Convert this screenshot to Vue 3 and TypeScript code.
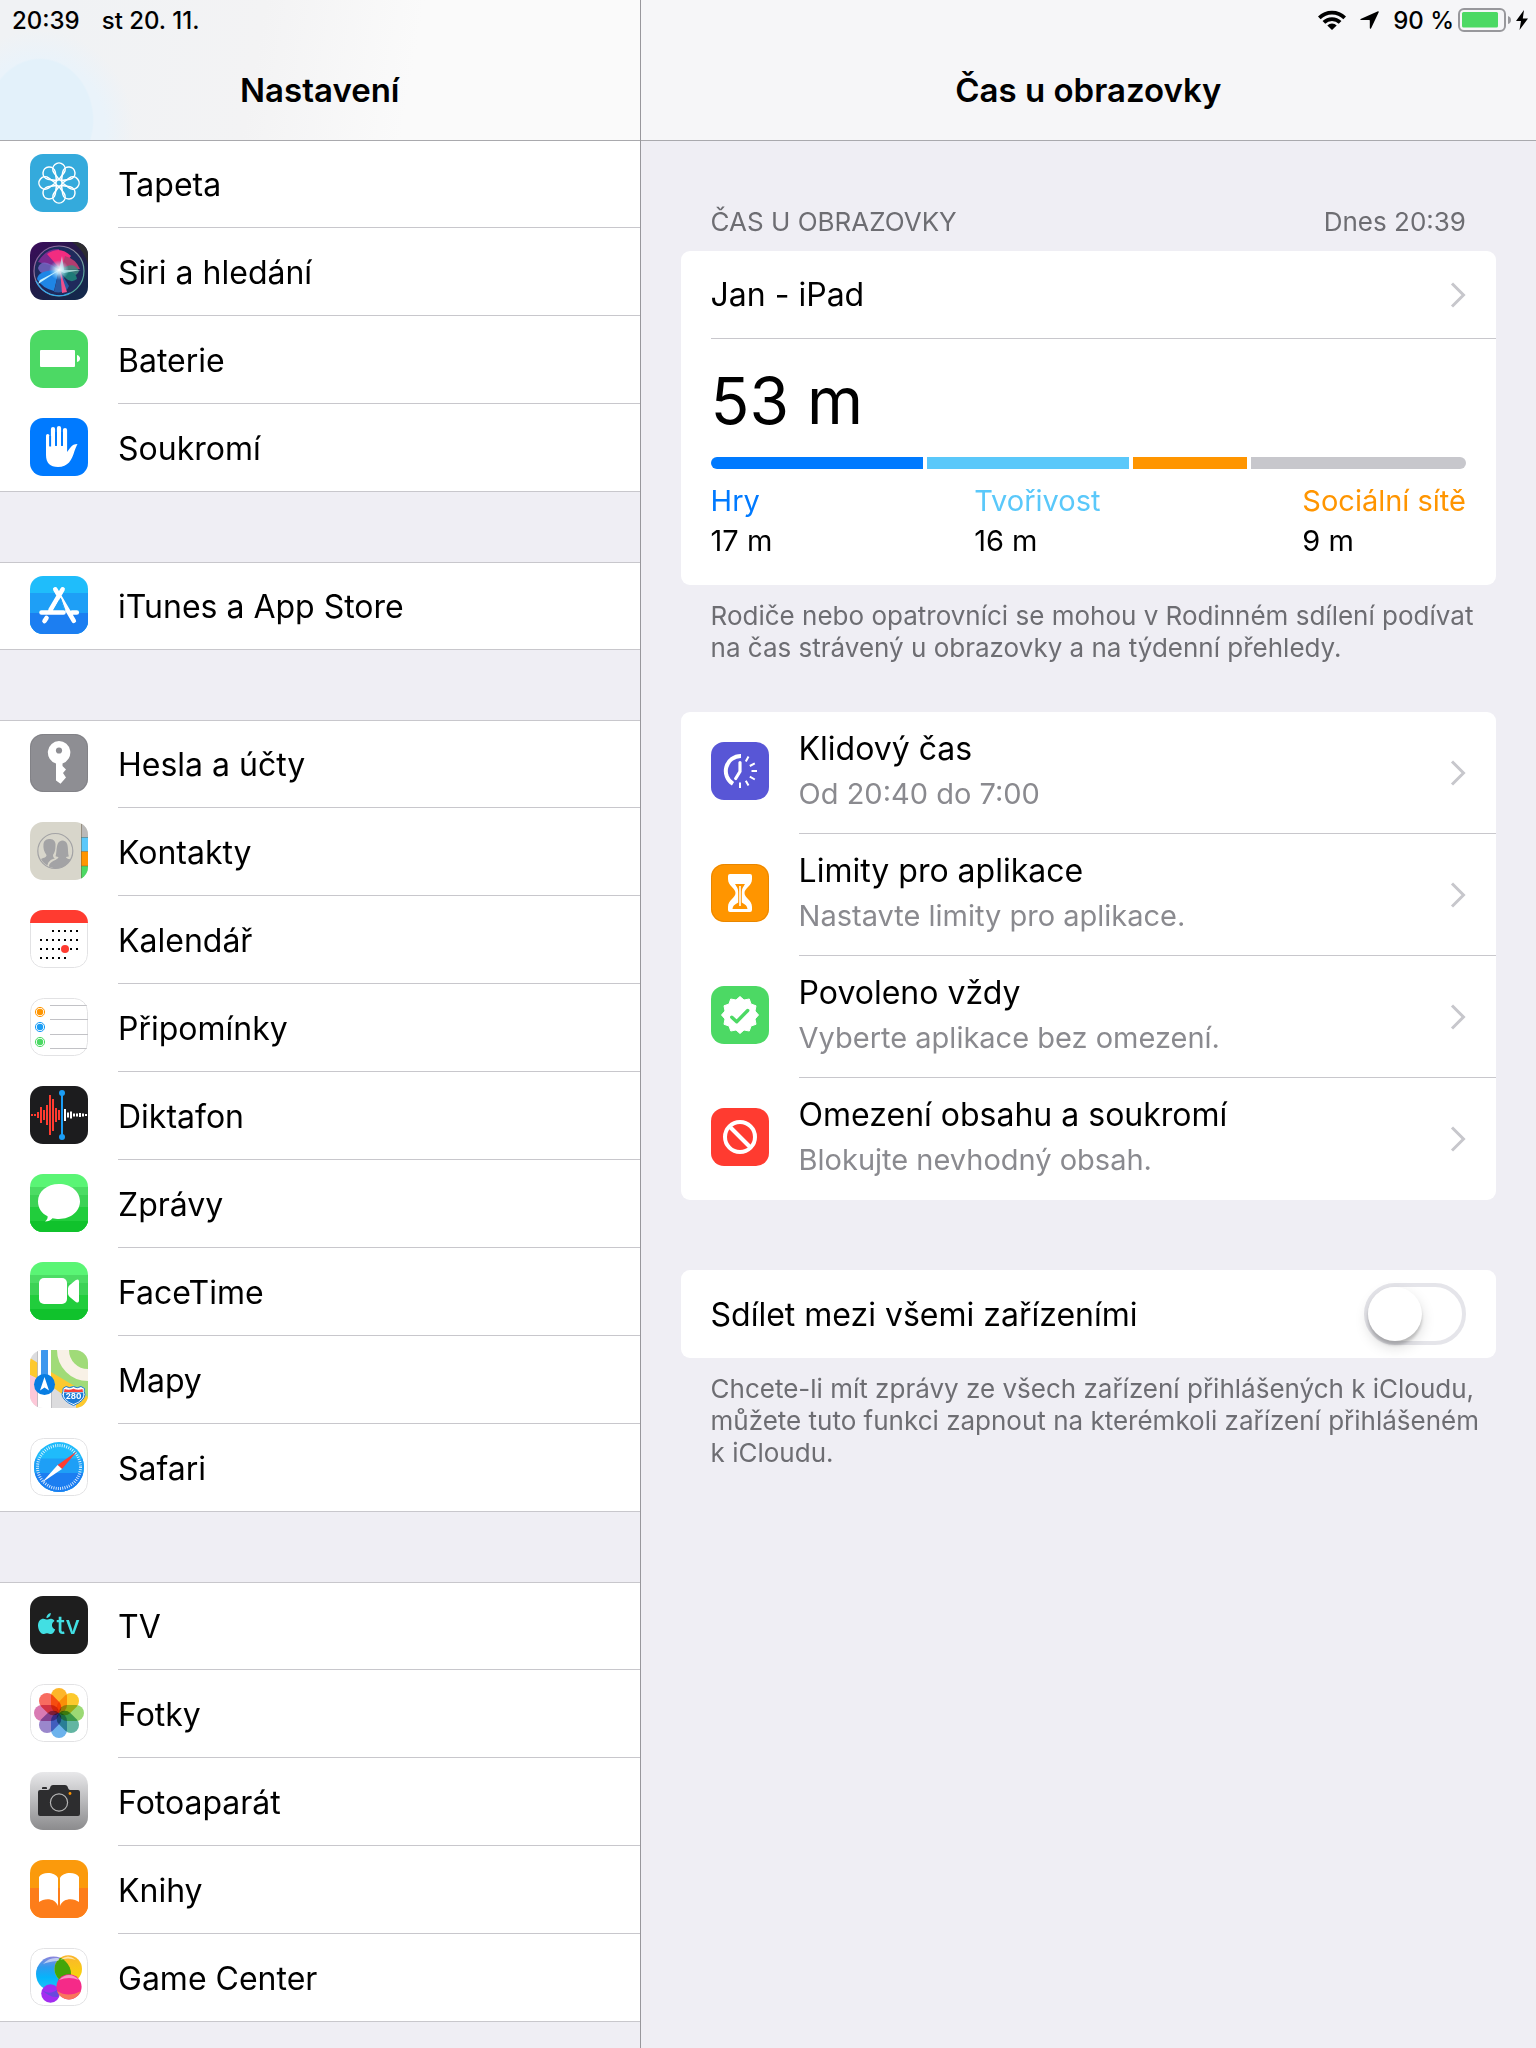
<script setup lang="ts">
import { ref } from 'vue'

interface SidebarItem {
  label: string
  icon: string
}

interface Usage {
  label: string
  time: string
  color: string
}

interface Option {
  title: string
  note: string
  icon: string
}

const bg = (color: string) => `<rect width="58" height="58" fill="${color}"/>`
const bands = (list: [number, string][]) =>
  list.map(([y, color]) => `<rect y="${y}" width="58" height="${58 - y}" fill="${color}"/>`).join('')
const outline = '<rect x=".5" y=".5" width="57" height="57" rx="13" fill="none" stroke="#e2e2e4"/>'
const spin = (count: number, draw: (i: number) => string) =>
  Array.from({ length: count }, (_, i) => `<g transform="rotate(${(360 / count) * i} 29 29)">${draw(i)}</g>`).join('')

const greenBands = bands([[0, '#5af575'], [13, '#4cdc64'], [21, '#3cd255'], [33, '#21cd3c'], [47, '#10c22c']])
const blueBands: [number, string][] = [[0, '#1fbdfb'], [17, '#1e9ff6'], [37, '#1c7ef1']]

const calendarDots = [[21, 2, 7], [30, 0, 7], [39, 0, 7], [48, 0, 5]]
  .map(([y, from, to]) =>
    Array.from({ length: to - from }, (_, i) => `<rect x="${10 + (from + i) * 6}" y="${y - 1}" width="2" height="2"/>`).join(''))
  .join('')

const wave = (start: number, heights: number[], color: string) =>
  heights.map((h, i) => `<rect x="${start + i * 3 - 1}" y="${29 - h / 2}" width="2" height="${h}" fill="${color}"/>`).join('')

const badge = Array.from({ length: 24 }, (_, i) => {
  const r = i % 2 ? 15.5 : 18.5
  const a = (Math.PI / 12) * i
  return `${(29 + r * Math.sin(a)).toFixed(1)},${(29 - r * Math.cos(a)).toFixed(1)}`
}).join(' ')

const petals = ['#fdb62a', '#fcc92d', '#9bd974', '#62b5a2', '#6cb2ec', '#9a87cc', '#d97ab3', '#f86c60']

const icons = {
  wallpaper: `${bg('#34aadc')}<g fill="none" stroke="#fff" stroke-width="1.5">${spin(8, () => '<path d="M29 25.500L23.800 18.500A6.200 6.200 0 1 1 34.200 18.500Z"/>')}<circle cx="29" cy="29" r="3.200"/></g>`,
  siri: `<defs><linearGradient id="siri-bg" x1="0" y1="0" x2=".7" y2="1"><stop offset="0" stop-color="#3c0b5c"/><stop offset=".5" stop-color="#241a48"/><stop offset="1" stop-color="#14284c"/></linearGradient><radialGradient id="siri-core"><stop offset="0" stop-color="#fff"/><stop offset=".35" stop-color="#d6f6ff" stop-opacity=".8"/><stop offset="1" stop-color="#8fd8ff" stop-opacity="0"/></radialGradient><linearGradient id="siri-ring" x1="0" y1="0" x2="1" y2="1"><stop offset="0" stop-color="#8a4a9c"/><stop offset=".45" stop-color="#8e8ea0"/><stop offset="1" stop-color="#3cb59a"/></linearGradient></defs>
<rect width="58" height="58" fill="url(#siri-bg)"/><path d="M42 0H58V22Q54 8 42 0Z" fill="#2c2c30"/><circle cx="29" cy="29" r="25" fill="#1f2a5c"/>
<path d="M8 20Q16 6 29 7L33 27Z" fill="#7a2a90"/><path d="M17 12Q30 3 41 14L31 28Z" fill="#f22c80"/><path d="M35 14Q46 17 50 27L31 28Z" fill="#b23d70"/>
<path d="M30 28Q44 18 49 29Q46 38 30 28Z" fill="#3f8a80" opacity=".85"/><path d="M30 28Q46 28 47 37Q38 44 30 28Z" fill="#1e7a78"/>
<path d="M29 28Q12 14 8 26Q10 36 29 28Z" fill="#7a68c8" opacity=".8"/><path d="M29 28Q8 28 7 37Q12 46 24 49Z" fill="#1f86e6"/>
<path d="M29 28L24 50Q36 52 39 44Z" fill="#2a5aa4"/><path d="M30 28L32 51L37 50Z" fill="#f0508c"/>
<path d="M31 27L8 42L10 38Z" fill="#c5f2ff"/><path d="M29 28L32 14L34 28L51 28L34 31Z" fill="#c8f0ee" opacity=".75"/><circle cx="29" cy="28" r="10" fill="url(#siri-core)"/>
<circle cx="29" cy="29" r="25" fill="none" stroke="url(#siri-ring)" stroke-width="1.2"/><path d="M6 39A25 25 0 0 0 40 51" fill="none" stroke="#36a8f0" stroke-width="1.2"/>`,
  battery: `${bg('#4cd964')}<rect x="10" y="20" width="35" height="17" rx="1" fill="#fff"/><path d="M47 25Q50 26 50 28.500Q50 31 47 32Z" fill="#fff"/>`,
  privacy: `${bg('#007aff')}<g fill="none" stroke="#fff" stroke-linecap="round"><path d="M17.700 17.700V34" stroke-width="3.400"/><path d="M23 11V34M29 10V34M35 12V34" stroke-width="4.200"/></g><path d="M16 28H37V34C40 31 41 26 47.500 26C46.500 28 45.500 30 44.500 33C42 42 38 49 28 49C20 49 16 45 16 37Z" fill="#fff"/><path d="M20.200 18V28.500M26 14V27.500M32 14V27.500" stroke="#007aff" stroke-width="1.800"/>`,
  appStore: `${bands(blueBands)}<path d="M32.600 13.300L20.500 34M11.500 36.500H33.500M42 36.500H46.800M16.500 42L14.500 45M25.300 13.300L43.800 44.800" stroke="#fff" stroke-width="4.600" stroke-linecap="round"/><path d="M30.500 21.500L23.500 34H34.500Z" fill="#1e9ff6"/><path d="M30.700 22.500L35 34.300" stroke="#1e9ff6"/>`,
  key: `${bg('#8e8e93')}<rect x=".5" y=".5" width="57" height="57" rx="13" fill="none" stroke="#828287"/><path d="M29 7A11.500 11.500 0 0 1 32.500 29.400V32L36 35.500L33 39L36 43.500L30.500 49.700L26 46.500V29.500A11.500 11.500 0 0 1 29 7Z" fill="#fff"/><circle cx="29" cy="16.500" r="3.100" fill="#8e8e93"/>`,
  contacts: `${bg('#d8d6cb')}<path d="M51 0H58V15H51Z" fill="#bab9b8"/><path d="M51 15H58V29.500H51Z" fill="#5ac8fa"/><path d="M51 29.500H58V44H51Z" fill="#ff9500"/><path d="M51 44H58V58H51Z" fill="#4cd964"/><path d="M51.500 2V56M51 15.500H58M51 29.500H58M51 44H58" stroke="#6b5a3c" stroke-opacity=".45"/>
<circle cx="25.300" cy="29" r="17.500" fill="none" stroke="#a3a3a5" stroke-width="1.200"/><g fill="#a3a3a5"><path d="M11 37C14 35.500 16.500 35.500 16.500 33C14 30 13 26 13.500 22C14 18 17 17 20 17C24 17 26 20 25.500 24C25.500 28 24.500 31 23 33C23 35.500 24 36 25 36.300C20 38 18 40 17.500 43.500C14.500 42 12.500 39.800 11 37Z"/><path d="M18.800 44.500C19.500 38.500 28 38.500 28.500 35C26.500 35 25.500 34.300 25.500 34.300C27.500 30 25 19 32.500 18.500C40 19 37 30 39 34.300C39 34.300 38 35 36 35C36 36.500 39 37 40.500 37.500C36.500 45.500 27 48.500 18.800 44.500Z"/></g>`,
  calendar: `${bg('#fff')}${outline}<rect width="58" height="13" fill="#ff3b30"/>${calendarDots}<circle cx="35" cy="39" r="4" fill="#ff3b30"/>`,
  reminders: `${bg('#fff')}${outline}${[[14, '#ff9500'], [29, '#1b9df5'], [44, '#4cd964']].map(([y, c]) => `<circle cx="10" cy="${y}" r="3.200" fill="${c}"/><circle cx="10" cy="${y}" r="4.600" fill="none" stroke="${c}"/>`).join('')}<path d="M20 7.500H58M20 21.500H58M20 36.500H58M20 50.500H58" stroke="#c2c2c6"/>`,
  voice: `${bg('#1c1c1e')}${wave(2, [2, 2, 6, 16, 10, 20, 40, 32, 14, 10], '#ff3b30')}${wave(35, [12, 5, 7, 3, 3, 4, 3, 2], '#fff')}<path d="M32 7V51" stroke="#1b9df5" stroke-width="2"/><g fill="#1b9df5"><circle cx="32" cy="7" r="3"/><circle cx="32" cy="51" r="3"/></g>`,
  messages: `${greenBands}<path d="M29 10C41 10 50 17.500 50 27.300S41 45 29 45C26.500 45 24.500 44.700 22.500 44.200C20.500 46.500 18 47.500 15 47.500C17 46 18 44 17.600 42.300C11.500 39.500 8 34 8 27.300C8 17.500 17 10 29 10Z" fill="#fff"/>`,
  facetime: `${greenBands}<rect x="9" y="16" width="28" height="26" rx="5" fill="#fff"/><path d="M38 26.500Q38 24.500 39.500 23.300L45.500 18.300Q49 16 49 19.500V38.500Q49 42 45.500 39.700L39.500 34.700Q38 33.500 38 31.500Z" fill="#fff"/>`,
  maps: `${bg('#dcdcde')}<path d="M21 0H58V48L21 24Z" fill="#a0db78"/><path d="M0 8L8 13V29L0 25Z" fill="#fdc92e"/><path d="M0 25L8 29V58H0Z" fill="#fdc8d8"/><path d="M21 22L58 44V58H44L21 38Z" fill="#fdc92e"/><path d="M40 37L58 47V36H40Z" fill="#a0db78"/><path d="M21 36L46 54V58H21Z" fill="#dcdcde"/><circle cx="58" cy="0" r="25" fill="none" stroke="#f8f1e6" stroke-width="12"/><rect x="8" width="13" height="58" fill="#fff"/><path d="M7.500 0V58M21.500 36V58" stroke="#b9b9bd" stroke-width=".8"/><rect x="11" width="7" height="28" fill="#3d97ee"/><circle cx="14.500" cy="34.500" r="10.500" fill="#087de2"/><path d="M14.500 27L19 40.500L14.500 37.500L10 40.500Z" fill="#fff"/>
<path d="M33 38.500L36 36.500Q40 39 43.500 36.500Q47 39 51 36.500L54.500 38.500Q53.500 41 55 44.500Q54.500 51 43.500 55.500Q33 51 32 44.500Q33.500 41 33 38.500Z" fill="#fff" stroke="#1b7ad6"/><path d="M34.500 39Q39 40.500 43.500 38.800Q48 40.500 52.500 39L53 42H34Z" fill="#f8403a"/><path d="M34 42.500H53.300Q55 50 43.500 54Q32 50 34 42.500Z" fill="#1b7ad6"/><text x="43.500" y="49" font-size="8" font-weight="700" fill="#fff" text-anchor="middle">280</text>`,
  safari: `<defs><clipPath id="safari-disc"><circle cx="29" cy="29" r="25"/></clipPath></defs>${bg('#fff')}${outline}<g clip-path="url(#safari-disc)">${bands([[0, '#1fbbfb'], [20.5, '#1e9ff6'], [35, '#1c7ef1']])}</g><circle cx="29" cy="29" r="21.500" fill="none" stroke="#fff" stroke-opacity=".85" stroke-width="3" stroke-dasharray=".9 1.350"/><path d="M47 13.300L32 31L27.600 27Z" fill="#ff3b30"/><path d="M12 44.500L27.600 27L32 31Z" fill="#fff"/>`,
  tv: `${bg('#1e1e1e')}<path d="M20.800 17C21 19.500 19 22 16.500 22C16.300 19.500 18.500 17.300 20.800 17ZM24.500 25C20.800 27 21.300 32 25.200 33.500C24 36.500 22.500 38 21 38C19.500 38 18.800 37.200 17 37.200S14.500 38 13.200 38C10.500 38 8 33.500 8 29.500C8 25.500 10.500 22.800 13.500 22.800C15 22.800 16 23.600 17 23.600S19.500 22.600 21.200 22.800C22.500 22.900 23.800 23.700 24.500 25Z" fill="#42dfe3"/><text x="26.500" y="37.500" font-size="25" font-weight="500" fill="#42dfe3">tv</text>`,
  photos: `${bg('#fff')}${outline}<g style="isolation:isolate">${spin(8, (i) => `<rect x="21" y="4" width="16" height="25" rx="8" fill="${petals[i]}" style="mix-blend-mode:multiply"/>`)}</g>`,
  camera: `<defs><linearGradient id="camera-bg" x1="0" y1="0" x2="0" y2="1"><stop offset="0" stop-color="#e8e8ea"/><stop offset="1" stop-color="#8b8b8d"/></linearGradient></defs><rect width="58" height="58" fill="url(#camera-bg)"/><path d="M10 18H17.500Q19.500 18 20 16L20.500 14.500Q21 13 23 13H35Q37 13 37.500 14.500L38.500 17Q39 18 40.500 18H48Q50 18 50 20V42Q50 44 48 44H10Q8 44 8 42V20Q8 18 10 18ZM12 17V16Q12 15 13 15H16Q17 15 17 16V17Z" fill="#2d2d2f"/><circle cx="29" cy="30.500" r="8.600" fill="none" stroke="#b4b4b4" stroke-width="1.200"/><circle cx="40" cy="21.500" r="1.400" fill="#ff9500"/>`,
  books: `${bands([[0, '#fb9a0c'], [28, '#fd7d1a']])}<path d="M9 17C12 11.500 25 11.500 28 18V46C25 37.500 14 38 9 42ZM49 17C46 11.500 33 11.500 30 18V46C33 37.500 44 38 49 42Z" fill="#fff"/>`,
  gameCenter: `<defs><clipPath id="game-blue"><circle cx="23.500" cy="26" r="17.500"/></clipPath><linearGradient id="game-blue-fill" x1="0" y1="0" x2="0" y2="1"><stop offset="0" stop-color="#8f86dc"/><stop offset=".3" stop-color="#2f9bee"/><stop offset=".6" stop-color="#06b4fb"/><stop offset="1" stop-color="#22c6f6"/></linearGradient><linearGradient id="game-gold" x1="0" y1="0" x2="0" y2="1"><stop offset="0" stop-color="#fbb52e"/><stop offset="1" stop-color="#f6dc00"/></linearGradient></defs>${bg('#fff')}${outline}<circle cx="23.500" cy="26" r="17.500" fill="url(#game-blue-fill)"/><circle cx="38.300" cy="21" r="13.700" fill="url(#game-gold)"/><circle cx="38.300" cy="21" r="13.700" fill="#43a50a" clip-path="url(#game-blue)"/><path d="M28 31Q35 36 40 28L38 38H30Z" fill="#12bc32" clip-path="url(#game-blue)"/><path d="M13 16Q19 9 28 10Q31 12 27 13Q18 14 13 16Z" fill="#fff" opacity=".55"/><path d="M30 12Q38 5 46 12Q38 9 30 12Z" fill="#fff" opacity=".6"/><circle cx="20.500" cy="45.500" r="9.300" fill="#a32cf0"/><path d="M12 42Q20 48 28 41Q30 45 28 49Q20 50 12 42Z" fill="#5a50d8" opacity=".8"/><circle cx="39" cy="38.800" r="12.600" fill="#f52a88"/><path d="M27 43Q38 50 51 43Q47 51 39 51.400Q30 51 27 43Z" fill="#f8765c"/><path d="M29 32Q39 22 49 32Q39 28 29 32Z" fill="#fff" opacity=".5"/>`,
  downtime: `${bg('#5856d6')}<g fill="none" stroke="#fff"><path d="M30 14A15 15 0 0 0 22 41.800" stroke-width="4"/><path d="M29 20.500V29.500L24.700 36.500" stroke-width="3.200" stroke-linecap="round" stroke-linejoin="round"/><path d="M37.500 14.500L34.800 19.500M43.800 21.300L38.800 24M46 29H40.500M43.800 37.500L38.800 34.700M37.500 43.500L34.800 38.700M29 46V40.500" stroke-width="2"/></g>`,
  hourglass: `${bg('#ff9500')}<rect x=".5" y=".5" width="57" height="57" rx="13" fill="none" stroke="#e88600"/><path d="M17 12Q17 10 19 10H39Q41 10 41 12V15C41 22 33.500 24 33.500 29S41 36 41 43V46Q41 48 39 48H19Q17 48 17 46V43C17 36 24.500 34 24.500 29S17 22 17 15V12Q17 10 19 10Z" fill="#fff"/><path d="M24 20H34L32.500 22.500C31 24.500 30.800 26 30.800 29V38.500C32.500 40 36 40.500 36.500 45H21.500C22 40.500 25.500 40 27.200 38.500V29C27.200 26 27 24.500 25.500 22.500Z" fill="#ff9500"/><path d="M29 22V42" stroke="#fff" stroke-width="1.600"/>`,
  allowed: `${bg('#4cd964')}<polygon points="${badge}" fill="#fff" stroke="#fff" stroke-width="1" stroke-linejoin="round"/><path d="M20.800 31.200L25.700 35.700L36.700 24.500" fill="none" stroke="#4cd964" stroke-width="3.400" stroke-linecap="round" stroke-linejoin="round"/>`,
  restrict: `${bg('#ff3b30')}<g fill="none" stroke="#fff" stroke-width="4"><circle cx="29" cy="29" r="15"/><path d="M18.500 18.500L39.500 39.500"/></g>`,
}

const groups: SidebarItem[][] = [
  [
    { label: 'Tapeta', icon: icons.wallpaper },
    { label: 'Siri a hledání', icon: icons.siri },
    { label: 'Baterie', icon: icons.battery },
    { label: 'Soukromí', icon: icons.privacy },
  ],
  [{ label: 'iTunes a App Store', icon: icons.appStore }],
  [
    { label: 'Hesla a účty', icon: icons.key },
    { label: 'Kontakty', icon: icons.contacts },
    { label: 'Kalendář', icon: icons.calendar },
    { label: 'Připomínky', icon: icons.reminders },
    { label: 'Diktafon', icon: icons.voice },
    { label: 'Zprávy', icon: icons.messages },
    { label: 'FaceTime', icon: icons.facetime },
    { label: 'Mapy', icon: icons.maps },
    { label: 'Safari', icon: icons.safari },
  ],
  [
    { label: 'TV', icon: icons.tv },
    { label: 'Fotky', icon: icons.photos },
    { label: 'Fotoaparát', icon: icons.camera },
    { label: 'Knihy', icon: icons.books },
    { label: 'Game Center', icon: icons.gameCenter },
  ],
]

const segments = [
  { share: 212, color: '#007aff' },
  { share: 202, color: '#5ac8fa' },
  { share: 114, color: '#ff9500' },
  { share: 215, color: '#c7c7cc' },
]

const usage: Usage[] = [
  { label: 'Hry', time: '17 m', color: '#007aff' },
  { label: 'Tvořivost', time: '16 m', color: '#5ac8fa' },
  { label: 'Sociální sítě', time: '9 m', color: '#ff9500' },
]

const options: Option[] = [
  { title: 'Klidový čas', note: 'Od 20:40 do 7:00', icon: icons.downtime },
  { title: 'Limity pro aplikace', note: 'Nastavte limity pro aplikace.', icon: icons.hourglass },
  { title: 'Povoleno vždy', note: 'Vyberte aplikace bez omezení.', icon: icons.allowed },
  { title: 'Omezení obsahu a soukromí', note: 'Blokujte nevhodný obsah.', icon: icons.restrict },
]

const shareAcross = ref(false)
</script>

<template>
  <div class="settings">
    <aside class="sidebar">
      <header class="bar bar-left">
        <div class="status">
          <span>20:39</span>
          <span>st 20. 11.</span>
        </div>
        <h2 class="title">Nastavení</h2>
      </header>
      <nav class="groups">
        <ul v-for="(group, g) in groups" :key="g" class="group">
          <li v-for="item in group" :key="item.label">
            <a href="#" class="item">
              <svg class="icon" viewBox="0 0 58 58" aria-hidden="true" v-html="item.icon"></svg>
              <span class="item-label">{{ item.label }}</span>
            </a>
          </li>
        </ul>
      </nav>
    </aside>

    <main class="detail">
      <header class="bar bar-right">
        <div class="status status-right">
          <svg class="wifi" viewBox="0 0 28 20" aria-hidden="true">
            <g fill="none" stroke="#000" stroke-width="3.8">
              <path d="M1.300 7.800A18 18 0 0 1 26.700 7.800" />
              <path d="M5.900 12.400A11.500 11.500 0 0 1 22.100 12.400" />
            </g>
            <path d="M9.300 15.600A6.500 6.500 0 0 1 18.700 15.600L14 20Z" />
          </svg>
          <svg class="location" viewBox="0 0 19 18" aria-hidden="true">
            <path d="M18 .3Q19 0 18.700 1.200L11 17.500Q10 18.300 9.800 17V9.500Q9.800 9 9.200 9H1Q-.3 8.800.6 7.900Z" />
          </svg>
          <span>90 %</span>
          <svg class="charge" viewBox="0 0 54 24" aria-hidden="true">
            <rect x="1" y="1" width="46" height="22" rx="5" fill="none" stroke="#98989c" stroke-width="2" />
            <rect x="4" y="4" width="36" height="15.500" rx="1.500" fill="#4cd964" />
            <path d="M50 8Q53 9 53 12T50 16Z" fill="#98989c" />
          </svg>
          <svg class="bolt" viewBox="0 0 12 20" aria-hidden="true"><path d="M8 0L0 11H5L3.500 20L12 8.500H6.800Z" /></svg>
        </div>
        <h1 class="title">Čas u obrazovky</h1>
      </header>

      <div class="content">
        <section>
          <div class="caption">
            <h3>ČAS U OBRAZOVKY</h3>
            <span>Dnes 20:39</span>
          </div>
          <div class="card">
            <a href="#" class="device">
              <span>Jan - iPad</span>
              <svg class="chevron" viewBox="0 0 16 26" aria-hidden="true"><path d="M2 1.500L13.500 13L2 24.500" /></svg>
            </a>
            <div class="summary">
              <p class="total">53 m</p>
              <div class="meter">
                <span
                  v-for="segment in segments"
                  :key="segment.color"
                  class="segment"
                  :style="{ flexGrow: segment.share, background: segment.color }"
                ></span>
              </div>
              <dl class="legend">
                <div v-for="entry in usage" :key="entry.label">
                  <dt :style="{ color: entry.color }">{{ entry.label }}</dt>
                  <dd>{{ entry.time }}</dd>
                </div>
              </dl>
            </div>
          </div>
          <p class="footnote">
            Rodiče nebo opatrovníci se mohou v&nbsp;Rodinném sdílení podívat<br />na čas strávený u obrazovky a na týdenní přehledy.
          </p>
        </section>

        <section class="card options">
          <a v-for="option in options" :key="option.title" href="#" class="option">
            <svg class="icon" viewBox="0 0 58 58" aria-hidden="true" v-html="option.icon"></svg>
            <span class="option-body">
              <span class="option-text">
                <span class="option-title">{{ option.title }}</span>
                <span class="option-note">{{ option.note }}</span>
              </span>
              <svg class="chevron" viewBox="0 0 16 26" aria-hidden="true"><path d="M2 1.500L13.500 13L2 24.500" /></svg>
            </span>
          </a>
        </section>

        <section>
          <div class="card share">
            <label for="share">Sdílet mezi všemi zařízeními</label>
            <input id="share" v-model="shareAcross" class="switch" type="checkbox" role="switch" />
          </div>
          <p class="footnote">
            Chcete-li mít zprávy ze všech zařízení přihlášených k iCloudu,<br />můžete tuto funkci zapnout na kterémkoli zařízení přihlášeném<br />k iCloudu.
          </p>
        </section>
      </div>
    </main>
  </div>
</template>

<style>
body {
  background: #efeef4;
}
</style>

<style scoped>
.settings {
  display: flex;
  min-height: 100vh;
  background: #efeef4;
  color: #000;
  font-family: Inter, "Liberation Sans", sans-serif;
  font-size: 32px;
}

h1,
h2,
h3,
p,
ul,
dl,
dd {
  margin: 0;
  padding: 0;
}

ul {
  list-style: none;
}

a {
  color: inherit;
  text-decoration: none;
}

.sidebar {
  flex: 5 1 0;
  min-width: 0;
}

.detail {
  box-sizing: border-box;
  flex: 7 1 0;
  min-width: 0;
  border-left: 1px solid #98979c;
}

.bar {
  position: relative;
  z-index: 1;
  box-sizing: border-box;
  height: 141px;
  border-bottom: 1px solid #a9a9ad;
}

.bar-left {
  background:
    radial-gradient(ellipse 54px 62px at 40px 120px, #e3f1fa 97%, transparent 100%),
    radial-gradient(ellipse 96px 100px at 38px 130px, #eaf3fa 70%, transparent 100%),
    linear-gradient(100deg, #f0f2f4 10%, #f3f3f4 40%, #fafafa 64%);
}

.bar-right {
  background: #f6f6f8;
}

.status {
  display: flex;
  gap: 22px;
  padding: 0 12px;
  height: 40px;
  align-items: center;
  font-size: 24px;
  font-weight: 500;
}

.status-right {
  justify-content: flex-end;
  gap: 14px;
  padding: 0 8px;
}

.wifi {
  width: 28px;
  height: 20px;
}

.location {
  width: 19px;
  height: 18px;
}

.charge {
  width: 54px;
  height: 24px;
  margin-left: -10px;
}

.bolt {
  width: 12px;
  height: 20px;
  margin-left: -10px;
}

.title {
  line-height: 100px;
  font-size: 33px;
  font-weight: 600;
  text-align: center;
}

.groups {
  display: flex;
  flex-direction: column;
  gap: 70px;
  margin-top: -1px;
}

.group {
  background: #fff;
  box-shadow: inset 0 1px #c8c7cc, inset 0 -1px #c8c7cc;
}

.item {
  display: flex;
  height: 88px;
}

.icon {
  flex: none;
  width: 58px;
  height: 58px;
  border-radius: 13px;
}

.item .icon {
  margin: 14px 30px;
}

.item-label {
  flex: 1;
  box-sizing: border-box;
  height: 88px;
  border-bottom: 1px solid #c8c7cc;
  line-height: 89px;
}

.content {
  display: flex;
  flex-direction: column;
  padding: 0 40px;
}

.caption {
  display: flex;
  justify-content: space-between;
  padding: 64px 30px 12px;
  color: #6d6d72;
  font-size: 26px;
  line-height: 34px;
}

.caption h3 {
  font-size: 26px;
  font-weight: 400;
}

.card {
  border-radius: 9px;
  background: #fff;
}

.device {
  display: flex;
  align-items: center;
  justify-content: space-between;
  box-sizing: border-box;
  height: 88px;
  margin-left: 30px;
  padding-right: 30px;
  border-bottom: 1px solid #c8c7cc;
}

.chevron {
  width: 16px;
  height: 26px;
  fill: none;
  stroke: #c7c7cc;
  stroke-width: 3;
}

.summary {
  padding: 22px 30px 24px;
}

.total {
  font-size: 64px;
  line-height: 80px;
}

.meter {
  display: flex;
  gap: 4px;
  height: 12px;
  margin: 16px 0 12px;
  overflow: hidden;
  border-radius: 6px;
}

.segment {
  flex-basis: 0;
}

.legend {
  display: flex;
  justify-content: space-between;
  font-size: 29px;
  line-height: 40px;
}

.footnote {
  padding: 15px 30px 0;
  color: #6d6d72;
  font-size: 26px;
  line-height: 32px;
  white-space: nowrap;
}

.options {
  margin: 48px 0 70px;
}

.option {
  display: flex;
  height: 122px;
}

.option .icon {
  margin: 30px;
}

.option-body {
  display: flex;
  flex: 1;
  align-items: center;
  justify-content: space-between;
  padding-right: 30px;
  border-bottom: 1px solid #c8c7cc;
}

.option:last-child .option-body {
  border-bottom-color: transparent;
}

.option-text {
  display: flex;
  flex-direction: column;
  padding-bottom: 4px;
}

.option-title {
  line-height: 46px;
}

.option-note {
  color: #8a8a8f;
  font-size: 29px;
  line-height: 44px;
}

.share {
  display: flex;
  align-items: center;
  justify-content: space-between;
  height: 88px;
  padding: 0 30px;
}

.switch {
  box-sizing: border-box;
  width: 102px;
  height: 62px;
  margin: 0;
  border: 4px solid #e5e5ea;
  border-radius: 31px;
  appearance: none;
  background: #fff;
  cursor: pointer;
}

.switch::before {
  display: block;
  width: 54px;
  height: 54px;
  border-radius: 50%;
  background: #fff;
  box-shadow: 0 6px 14px rgb(0 0 0 / 15%), 0 4px 3px rgb(0 0 0 / 18%);
  content: "";
}

.switch:checked {
  border-color: #4cd964;
  background: #4cd964;
}

.switch:checked::before {
  margin-left: 40px;
}
</style>
